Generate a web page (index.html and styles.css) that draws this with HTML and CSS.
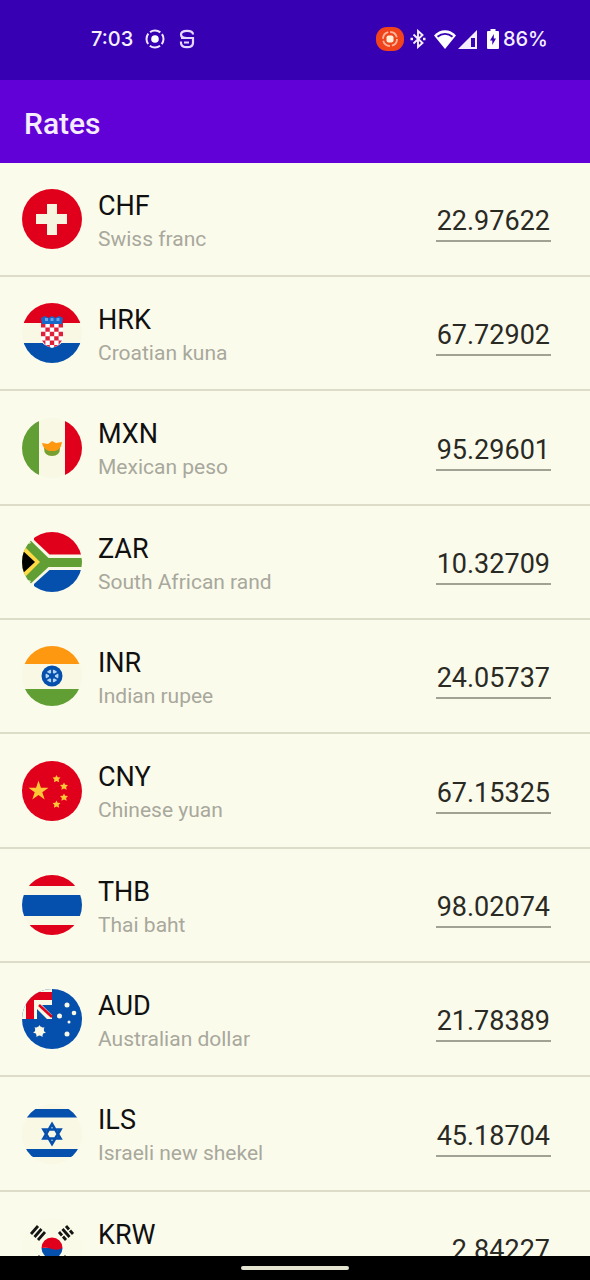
FILE: index.html
```html
<!DOCTYPE html>
<html lang="en">
<head>
<meta charset="utf-8">
<meta name="viewport" content="width=device-width, initial-scale=1">
<title>Rates</title>
<link rel="stylesheet" href="styles.css">
</head>
<body>
<div class="status">
  <div class="status-left">
    <span>7:03</span>
    <svg width="20" height="20" viewBox="0 0 20 20" fill="none" stroke="#f0e6ff" stroke-width="2"><circle cx="10" cy="10" r="8.5" stroke-dasharray="11 2.35" stroke-dashoffset="5.5"/><circle cx="10" cy="10" r="3.8" fill="#fff" stroke="none"/></svg>
    <svg width="16" height="20" viewBox="0 0 16 20" fill="none" stroke="#e6d8ff" stroke-width="2.2"><path d="M14 5.500C14 3 12 1.800 8 1.800S2 3 2 5.500 4 9 8 9h6v5c0 3-2 4.200-6 4.200S2 17 2 14v-1.500M2 9h12M5 13.500h5"/></svg>
  </div>
  <div class="status-right">
    <svg width="28" height="24" viewBox="0 0 28 24" fill="none"><rect width="28" height="24" rx="11" fill="#f0441c"/><circle cx="14" cy="12" r="7" stroke="#ffb49a" stroke-width="1.800" stroke-dasharray="9 2"/><rect x="10.500" y="8.500" width="7" height="7" rx="2" fill="#fff0d8"/></svg>
    <svg class="bluetooth" width="16" height="20" viewBox="0 0 16 20" fill="none" stroke="#f4edff" stroke-width="1.900"><path d="M3.500 5.500l9 8.500L8 18V2l4.500 4-9 8.500"/><path d="M.5 10h2.500M13 10h2.500" stroke-width="2.400"/></svg>
    <svg width="22" height="19" viewBox="0 0 22 19"><path d="M11 19L0 5.500C6-1.500 16-1.500 22 5.500z" fill="#fff"/><path d="M3.500 6.800C8 3 14 3 18.500 6.800" fill="none" stroke="#3700b3" stroke-width="1.800"/></svg>
    <svg width="19" height="19" viewBox="0 0 19 19"><path d="M19 0v19H0z" fill="#f4edff"/><path d="M13 8h4v9h-4z" fill="#3700b3"/></svg>
    <svg class="battery" width="12" height="20" viewBox="0 0 12 20"><path d="M3.500 0h5v2H11q1 0 1 1v16q0 1-1 1H1q-1 0-1-1V3q0-1 1-1h2.500z" fill="#fff"/><path d="M6.800 5L3 11.500h2.300V16L9 9.500H6.800z" fill="#3700b3"/></svg>
    <span>86%</span>
  </div>
</div>
<header class="appbar"><h1>Rates</h1></header>
<main class="content">
<ul class="rates">
  <li class="rate">
    <svg class="flag" viewBox="0 0 60 60"><path fill="#e0001b" d="M0 0h60v60H0z"/><path fill="#f6f6e0" d="M25 15h10v10h10v10H35v11H25V35H14V25h11z"/></svg>
    <label class="currency" for="chf"><span class="code">CHF</span><span class="name">Swiss franc</span></label>
    <input class="amount" id="chf" type="text" inputmode="decimal" value="22.97622">
  </li>
  <li class="rate">
    <svg class="flag" viewBox="0 0 60 60"><path fill="#f8f8e4" d="M0 0h60v60H0z"/><path fill="#e0001b" d="M0 0h60v20H0z"/><path fill="#0650ad" d="M0 40h60v20H0z"/><path fill="#fff" d="M19 20h22v16q0 6-11 9-11-3-11-9z"/><path fill="#e0203a" d="M19 20h4.400v4.400H19zm8.800 0h4.400v4.400h-4.400zm8.800 0H41v4.400h-4.400zM23.400 24.400h4.400v4.400h-4.400zm8.800 0h4.400v4.400h-4.400zM19 28.800h4.400v4.400H19zm8.800 0h4.400v4.400h-4.400zm8.800 0H41v4.400h-4.400zM23.400 33.200h4.400v4.400h-4.400zm8.800 0h4.400v4.400h-4.400zM20 37.600h3.400v4.400zm7.800 0h4.400V42h-4.400zm8.800 0H40L36.600 42zM23.400 42h4.400v2.200zm8.800 0h4.400l-4.400 2.200z"/><path fill="#1768c8" d="M19 15l4-2 3.500 2 3.500-2 3.500 2 3.500-2 4 2-1 6H20z"/><path fill="#6aa4e8" d="M23 15h3v3h-3zm5.500 0h3v3h-3zm6 0h3v3h-3z"/></svg>
    <label class="currency" for="hrk"><span class="code">HRK</span><span class="name">Croatian kuna</span></label>
    <input class="amount" id="hrk" type="text" inputmode="decimal" value="67.72902">
  </li>
  <li class="rate">
    <svg class="flag" viewBox="0 0 60 60"><path fill="#f8f8e4" d="M0 0h60v60H0z"/><path fill="#619f35" d="M0 0h17v60H0z"/><path fill="#e0001b" d="M43 0h17v60H43z"/><path fill="#78a030" d="M22 30h16q0 8-8 8t-8-8z"/><path fill="#ff9811" d="M20 25l6 1 4-3 4 2 6-1q-1 8-7 9h-6q-6-2-7-8z"/></svg>
    <label class="currency" for="mxn"><span class="code">MXN</span><span class="name">Mexican peso</span></label>
    <input class="amount" id="mxn" type="text" inputmode="decimal" value="95.29601">
  </li>
  <li class="rate">
    <svg class="flag" viewBox="0 0 60 60"><path fill="#f8f8e4" d="M0 0h60v60H0z"/><path fill="#e0001b" d="M12 0h48v22.500H27.500L12 8z"/><path fill="#0650ad" d="M12 60h48V38H27.500L12 52z"/><path fill="#619f35" d="M0 4h4l22.500 22H60v9H26.500L4 56H0z"/><path fill="#f8f8e4" d="M0 0l9 11-3 1-6-4zM0 60l9-11-3-1-6 4z"/><path fill="#ffda44" d="M0 12l18 18L0 48z"/><path fill="#000" d="M0 18l13 12L0 42z"/></svg>
    <label class="currency" for="zar"><span class="code">ZAR</span><span class="name">South African rand</span></label>
    <input class="amount" id="zar" type="text" inputmode="decimal" value="10.32709">
  </li>
  <li class="rate">
    <svg class="flag" viewBox="0 0 60 60"><path fill="#f8f8e4" d="M0 0h60v60H0z"/><path fill="#ff9811" d="M0 0h60v18H0z"/><path fill="#619f35" d="M0 43h60v17H0z"/><circle cx="30" cy="30" r="10.500" fill="#0650ad"/><circle cx="30" cy="30" r="6.500" fill="#b4d4f4"/><path stroke="#0650ad" stroke-width="1.800" d="M30 23v14M24 26.500l12 7M36 26.500l-12 7"/><circle cx="30" cy="30" r="3" fill="#0650ad"/></svg>
    <label class="currency" for="inr"><span class="code">INR</span><span class="name">Indian rupee</span></label>
    <input class="amount" id="inr" type="text" inputmode="decimal" value="24.05737">
  </li>
  <li class="rate">
    <svg class="flag" viewBox="0 0 60 60"><path fill="#e0001b" d="M0 0h60v60H0z"/><g fill="#ffc738"><path d="M16.500 19.500l2.400 7.200h7.600l-6.200 4.500 2.400 7.300-6.200-4.500-6.200 4.500 2.400-7.300-6.200-4.500h7.600z"/><path d="M34.500 14l1.200 2.300 2.800.2-1.900 2 .6 2.800-2.700-1.300-2.600 1.300.5-2.800-1.900-2 2.800-.3zM42 21.500l1.200 2.300 2.800.2-1.900 2 .6 2.800-2.700-1.300-2.600 1.300.5-2.800-1.900-2 2.800-.3zM42 32.500l1.200 2.300 2.800.2-1.900 2 .6 2.800-2.700-1.300-2.600 1.300.5-2.800-1.900-2 2.800-.3zM34.500 39.500l1.200 2.300 2.800.2-1.900 2 .6 2.800-2.700-1.300-2.600 1.300.5-2.800-1.900-2 2.800-.3z"/></g></svg>
    <label class="currency" for="cny"><span class="code">CNY</span><span class="name">Chinese yuan</span></label>
    <input class="amount" id="cny" type="text" inputmode="decimal" value="67.15325">
  </li>
  <li class="rate">
    <svg class="flag" viewBox="0 0 60 60"><path fill="#f8f8e4" d="M0 0h60v60H0z"/><path fill="#e0001b" d="M0 0h60v11H0zM0 50h60v10H0z"/><path fill="#0650ad" d="M0 20h60v21H0z"/></svg>
    <label class="currency" for="thb"><span class="code">THB</span><span class="name">Thai baht</span></label>
    <input class="amount" id="thb" type="text" inputmode="decimal" value="98.02074">
  </li>
  <li class="rate">
    <svg class="flag" viewBox="0 0 60 60"><path fill="#0650ad" d="M0 0h60v60H0z"/><path fill="#f8f8e4" d="M0 0h30v30H0z"/><path fill="#e0001b" d="M4 3h26v8H12v19H4z"/><path fill="#0650ad" d="M20 16h10v10zM15 20v10h10z"/><path stroke="#e0001b" stroke-width="2.500" d="M17 16l13 12"/><g fill="#f8f8e4"><path d="M17.500 36l1.600 3 3.400-.7-1.300 3.200 2.700 2.200-3.300.8-.1 3.500-3-2-3 2-.1-3.500-3.300-.8 2.700-2.200-1.300-3.200 3.400.7z"/><circle cx="17.500" cy="42" r="4.500"/><circle cx="45" cy="16" r="2.500"/><circle cx="52" cy="24" r="2.300"/><circle cx="37.500" cy="27" r="2.500"/><circle cx="47" cy="33" r="1.500"/><circle cx="45" cy="45" r="2.500"/></g></svg>
    <label class="currency" for="aud"><span class="code">AUD</span><span class="name">Australian dollar</span></label>
    <input class="amount" id="aud" type="text" inputmode="decimal" value="21.78389">
  </li>
  <li class="rate">
    <svg class="flag" viewBox="0 0 60 60"><path fill="#f8f8e4" d="M0 0h60v60H0z"/><path fill="#0650ad" d="M0 5h60v8.500H0zM0 45h60v8H0z"/><path fill="none" stroke="#0650ad" stroke-width="2.600" d="M30 20l8.500 14.500h-17zM30 40l8.500-14.500h-17z"/></svg>
    <label class="currency" for="ils"><span class="code">ILS</span><span class="name">Israeli new shekel</span></label>
    <input class="amount" id="ils" type="text" inputmode="decimal" value="45.18704">
  </li>
  <li class="rate">
    <svg class="flag" viewBox="0 0 60 60"><path fill="#fafae8" d="M0 0h60v60H0z"/><path fill="#0650ad" d="M19.500 30a10.500 10.500 0 0 0 21 0z"/><path fill="#e0001b" d="M19.500 30a10.500 10.500 0 0 1 21 0q-5 3-10.500 1-5-2-10.500-1z"/><g stroke="#151515" stroke-width="2.800"><path d="M9 16l7-8M12.500 19l7-8M16 22l7-8"/><path d="M37 14l3 3.500M41 18.500l3 3.500M40.500 11l7 8M44 8l3 3.500M48 12.500l3 3.500M9 44l7 8M12.500 41l7 8M16 38l7 8M37 46l7-8M40.500 49l7-8M44 52l7-8"/></g></svg>
    <label class="currency" for="krw"><span class="code">KRW</span></label>
    <input class="amount" id="krw" type="text" inputmode="decimal" value="2.84227">
  </li>
</ul>
</main>
<div class="navbar"><div class="handle"></div></div>
</body>
</html>
```
FILE: styles.css
```css
* { box-sizing: border-box; }

body {
  margin: 0;
  height: 100vh;
  display: flex;
  flex-direction: column;
  overflow: hidden;
  background: #fbfbec;
  color: #101010;
  font-family: Roboto, "Noto Sans", sans-serif;
}

.status {
  flex: none;
  height: 80px;
  padding: 0 42px 2px 91px;
  display: flex;
  align-items: center;
  justify-content: space-between;
  background: #3700b3;
  color: #f6f0ff;
  font: 500 20px/24px Inter, sans-serif;
}

.status-left,
.status-right { display: flex; align-items: center; }
.status-left { gap: 12px; }
.status-left svg + svg { margin-left: 2px; }
.status-right { gap: 2px; }
.bluetooth { margin: 0 6px 0 4px; }
.battery { margin: 0 2px 0 8px; }

.appbar {
  flex: none;
  height: 83px;
  padding: 4px 24px 0;
  display: flex;
  align-items: center;
  background: #6200d8;
  color: #f6ecff;
}

.appbar h1 {
  margin: 0;
  font-size: 30px;
  line-height: 36px;
  font-weight: 500;
}

.content { flex: 1; min-height: 0; overflow: hidden; }

.rates { margin: 0; padding: 0; list-style: none; }

.rate {
  height: 114px;
  padding: 0 39px 0 22px;
  display: flex;
  align-items: center;
  gap: 16px;
  border-bottom: 2px solid #dcdcc8;
}
.rate:nth-child(3n) { height: 115px; }

.flag {
  flex: none;
  width: 60px;
  height: 60px;
  border-radius: 50%;
}

.currency {
  flex: 1;
  align-self: flex-start;
  padding-top: 26px;
  display: flex;
  flex-direction: column;
}
.code { font-size: 27px; line-height: 34px; }
.name { font-size: 21px; line-height: 32px; color: #a8a89c; }

.amount {
  width: 115px;
  height: 40px;
  margin-top: 6px;
  padding: 0 1px 0 0;
  border: 0;
  border-bottom: 2px solid #a2a294;
  border-radius: 0;
  outline: 0;
  background: transparent;
  color: #2a2a24;
  font: 27px/36px Roboto, "Noto Sans", sans-serif;
  text-align: right;
}

.navbar {
  flex: none;
  height: 24px;
  display: flex;
  align-items: center;
  justify-content: center;
  background: #000;
}

.handle {
  width: 108px;
  height: 4px;
  border-radius: 2px;
  background: #e4e4d0;
}
```
